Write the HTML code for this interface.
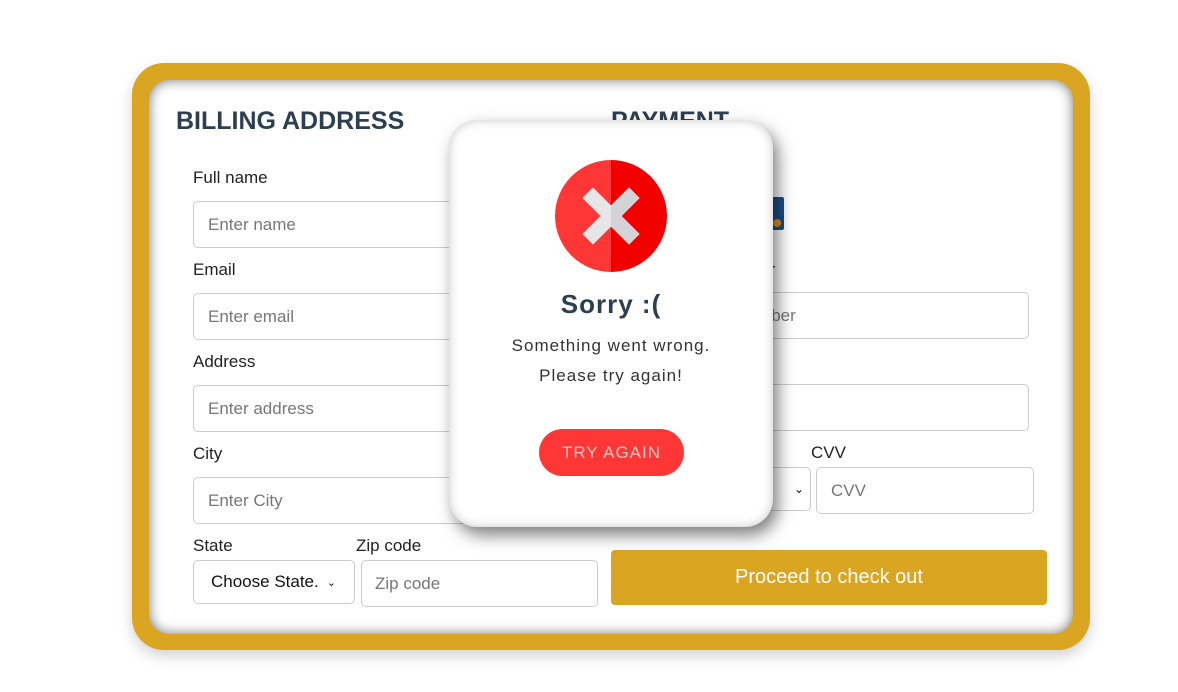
<!DOCTYPE html>
<html><head><style>
*{box-sizing:border-box;margin:0;padding:0}
body{width:1178px;height:692px;background:#fff;font-family:"Liberation Sans",sans-serif;position:relative;overflow:hidden}
.a{position:absolute}
.outer{left:132px;top:63px;width:958px;height:587px;background:#daa520;border-radius:32px;box-shadow:0 6px 14px rgba(0,0,0,.18)}
.inner{left:149px;top:80px;width:924px;height:554px;background:#fff;border-radius:20px;box-shadow:inset 0 0 12px rgba(0,0,0,.55)}
.h{font-weight:bold;font-size:25px;color:#2c3e50}
.lbl{font-size:17px;color:#222}
.in{border:1px solid #ccc;border-radius:5px;background:#fff;font-size:17px;color:#777;padding-left:14px;display:flex;align-items:center}
.modal{left:449px;top:120px;width:324px;height:407px;background:#fff;border-radius:28px;box-shadow:5px 8px 16px rgba(0,0,0,.5),inset 0 0 10px rgba(0,0,0,.22)}
</style></head><body>
<div class="a outer"></div>
<div class="a inner"></div>
<div class="a h" style="left:176px;top:107px">BILLING ADDRESS</div>
<div class="a h" style="left:611px;top:107px">PAYMENT</div>
<div class="a lbl" style="left:193px;top:168px">Full name</div>
<div class="a in" style="left:193px;top:201px;width:405px;height:47px">Enter name</div>
<div class="a lbl" style="left:193px;top:260px">Email</div>
<div class="a in" style="left:193px;top:293px;width:405px;height:47px">Enter email</div>
<div class="a lbl" style="left:193px;top:352px">Address</div>
<div class="a in" style="left:193px;top:385px;width:405px;height:47px">Enter address</div>
<div class="a lbl" style="left:193px;top:444px">City</div>
<div class="a in" style="left:193px;top:477px;width:405px;height:47px">Enter City</div>
<div class="a lbl" style="left:193px;top:536px">State</div>
<div class="a lbl" style="left:356px;top:536px">Zip code</div>
<div class="a in" style="left:193px;top:560px;width:162px;height:44px;color:#111;padding-left:17px">Choose State. <span style="font-size:11px;margin-left:8px">&#8964;</span></div>
<div class="a in" style="left:361px;top:560px;width:237px;height:47px;padding-left:13px">Zip code</div>
<div class="a" style="left:764px;top:197px;width:20px;height:33px;background:#1b4f86;border-radius:2px"></div>
<div class="a" style="left:773px;top:219px;width:8px;height:8px;background:#e7901a;border-radius:50%"></div>
<div class="a lbl" style="left:760px;top:260px">er</div>
<div class="a in" style="left:640px;top:292px;width:389px;height:47px">Enter card number</div>
<div class="a in" style="left:640px;top:384px;width:389px;height:47px"></div>
<div class="a lbl" style="left:811px;top:443px">CVV</div>
<div class="a in" style="left:640px;top:467px;width:171px;height:44px;justify-content:flex-end;padding-right:6px;color:#111;font-size:12px">&#8964;</div>
<div class="a in" style="left:816px;top:467px;width:218px;height:47px">CVV</div>
<div class="a" style="left:611px;top:550px;width:436px;height:55px;background:#daa520;border-radius:4px;color:#fff;font-size:20px;display:flex;align-items:center;justify-content:center">Proceed to check out</div>
<div class="a modal"></div>
<svg class="a" style="left:555px;top:160px" width="112" height="112" viewBox="0 0 112 112">
<defs><clipPath id="r"><rect x="56" y="0" width="56" height="112"/></clipPath></defs>
<path d="M56 0A56 56 0 0 0 56 112Z" fill="#ff3636"/>
<path d="M56 0A56 56 0 0 1 56 112Z" fill="#f20000"/>
<g transform="rotate(45 56 56)" fill="#e6e6e6">
<rect x="23" y="48.5" width="66" height="15"/><rect x="48.5" y="23" width="15" height="66"/></g>
<g clip-path="url(#r)"><g transform="rotate(45 56 56)" fill="#d4d4d8">
<rect x="23" y="48.5" width="66" height="15"/><rect x="48.5" y="23" width="15" height="66"/></g></g>
</svg>
<div class="a" style="left:449px;top:289px;width:324px;text-align:center;font-weight:bold;font-size:26px;color:#2c3e50;letter-spacing:1px">Sorry :(</div>
<div class="a" style="left:449px;top:331px;width:324px;text-align:center;font-size:17px;color:#333;letter-spacing:1px;line-height:30px">Something went wrong.<br>Please try again!</div>
<div class="a" style="left:539px;top:429px;width:145px;height:47px;background:#ff3636;border-radius:24px;color:#f5c6c6;font-size:17px;letter-spacing:1px;display:flex;align-items:center;justify-content:center">TRY AGAIN</div>
</body></html>
